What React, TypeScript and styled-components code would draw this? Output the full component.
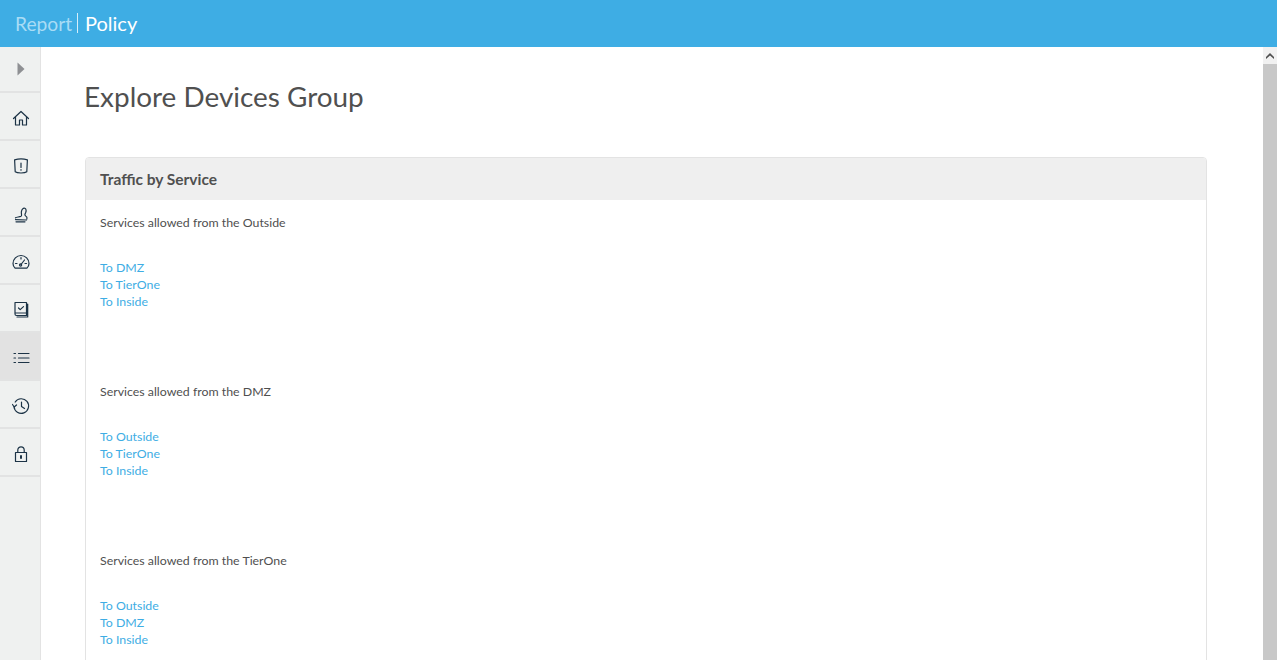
import React from "react";
import styled, { createGlobalStyle } from "styled-components";

const Global = createGlobalStyle`
  html, body { margin: 0; padding: 0; height: 100%; overflow: hidden; background: #fff; }
  body { font-family: "Lato", "Noto Sans", sans-serif; color: #4f4f4f; }
  #root { height: 100%; }
`;

const Page = styled.div`
  height: 660px;
  display: flex;
  flex-direction: column;
  overflow: hidden;
`;
const TopBar = styled.header`
  height: 47px;
  flex: none;
  box-sizing: border-box;
  padding: 0 0 1px 15px;
  background: #3eade4;
  display: flex;
  align-items: center;
  color: #fff;
  gap: 5px;
`;
const Crumb = styled.span`
  font-size: 19.2px;
  color: #a9dcf5;
`;
const CurrentCrumb = styled.span`
  font-size: 20px;
  margin-left: 2px;
  color: #fff;
`;
const Divider = styled.span`
  width: 1px;
  height: 20px;
  background: #d5eefa;
`;
const Body = styled.div`
  flex: 1;
  min-height: 0;
  display: flex;
`;
const Sidebar = styled.nav`
  width: 40px;
  flex: none;
  background: #eff1f0;
  border-right: 1px solid #e3e3e3;
  display: flex;
  flex-direction: column;
`;
const NavItem = styled.div<{ $active?: boolean; $first?: boolean }>`
  height: ${(p) => (p.$first ? 46 : 48)}px;
  flex: none;
  box-sizing: border-box;
  display: flex;
  align-items: center;
  justify-content: center;
  background: ${(p) => (p.$active ? "#e2e2e2" : "transparent")};
  border-bottom: 2px solid #e2e3e3;
  padding: ${(p) => (p.$first ? "0 0 0 1px" : "3px 0 0 1px")};
`;
const Main = styled.main`
  flex: 1;
  min-width: 0;
  overflow: hidden;
  padding: 0 56px 0 44px;
`;
const Title = styled.h1`
  margin: 31px 0 0 -1px;
  height: 79px;
  font-size: 27.9px;
  line-height: 36px;
  font-weight: 400;
  color: #505050;
`;
const Panel = styled.section`
  border: 1px solid #e3e3e3;
  border-radius: 4px;
  overflow: hidden;
`;
const PanelHead = styled.div`
  height: 42px;
  background: #efefef;
  display: flex;
  align-items: center;
  padding-left: 14px;
  font-size: 15.5px;
  font-weight: 700;
  color: #505050;
`;
const PanelBody = styled.div`
  padding: 14px 14px 0;
`;
const Group = styled.div`
  height: 169px;
  font-size: 12.35px;
  line-height: 17px;
`;
const Heading = styled.div`
  color: #4f4f4f;
  margin-bottom: 28px;
`;
const LinkItem = styled.a`
  display: block;
  color: #3eade4;
  text-decoration: none;
`;
const Scrollbar = styled.div`
  width: 14px;
  flex: none;
  background: #c8c8c8;
  display: flex;
  flex-direction: column;
`;
const ScrollButton = styled.div`
  height: 17px;
  background: #f1f1f1;
  display: flex;
  align-items: center;
  justify-content: center;
`;

const Ico = styled.svg`
  width: 18px;
  height: 18px;
  fill: none;
  stroke: #1c3346;
  stroke-width: 1.2;
  stroke-linecap: round;
  stroke-linejoin: round;
`;

const groups = [
  { from: "Outside", links: ["To DMZ", "To TierOne", "To Inside"] },
  { from: "DMZ", links: ["To Outside", "To TierOne", "To Inside"] },
  { from: "TierOne", links: ["To Outside", "To DMZ", "To Inside"] },
];

const icons: React.ReactNode[] = [
  <path key="h" d="M1.5 9.5 9 2.5l7.5 7M3.5 8v8h4v-5h3v5h4V8" />,
  <>
    <path d="M2.6 2.8C6 1.8 12 1.8 15.4 2.8L14.8 14.8c-2 1.6-9.6 1.6-11.6 0Z" />
    <path d="M9 6v4.5M9 12.6v.6" />
  </>,
  <>
    <path d="M4 16.8h9M3.5 14.6 14.5 15M3.5 12.8c1-.8 4-.8 5.5-1.6 1.4-.8 0-2.4.4-4.6.4-2.3 1.9-4 3.4-3.4s1.6 2.8.9 4.4c-.8 1.7-1.4 2.8.3 3.6 1 .4 1.2 1.4.9 2.8" />
  </>,
  <>
    <path d="M3.2 15.2C1.4 13.8 1 11.8 1 10.5a8 8 0 0 1 16 0c0 1.3-.4 3.3-2.2 4.7Z" />
    <path d="M9 11.5 12.5 7M9 4.5v1.5M3.5 10.5H5M13 10.5h1.5" />
    <circle cx="8.6" cy="12" r="1.1" />
  </>,
  <>
    <path d="M3 1.5h11.5v13H4.5A1.5 1.5 0 0 1 3 13V1.5ZM3 12h11.5M15.7 3v13H5" />
    <path d="m6.5 7 1.7 1.6 3.3-3" />
  </>,
  <>
    <path d="M6.5 4.5H17M6.5 9H17M6.5 13.5H17" />
    <path d="M2 4.5h1.5M2 9h1.5M2 13.5h1.5" />
  </>,
  <>
    <path d="M3.2 5A7.3 7.3 0 1 1 2 9.5" />
    <path d="M.5 7.5 2.2 10 4.5 8M9.5 5v4.5l3 2" />
  </>,
  <>
    <path d="M3.5 7.5h11v9h-11ZM5.8 7.5V5a3.2 3.2 0 0 1 6.4 0v2.5" />
    <path d="M9 11v2" strokeWidth="2" />
  </>,
];

export default function App() {
  return (
    <Page>
      <Global />
      <TopBar>
        <Crumb>Report</Crumb>
        <Divider />
        <CurrentCrumb>Policy</CurrentCrumb>
      </TopBar>
      <Body>
        <Sidebar>
          <NavItem $first>
            <svg width="8" height="14" viewBox="0 0 8 14">
              <path d="M0.5 0.5 7.5 7 0.5 13.5Z" fill="#8e9093" />
            </svg>
          </NavItem>
          {icons.map((icon, i) => (
            <NavItem key={i} $active={i === 5}>
              <Ico viewBox="0 0 18 18">{icon}</Ico>
            </NavItem>
          ))}
        </Sidebar>
        <Main>
          <Title>Explore Devices Group</Title>
          <Panel>
            <PanelHead>Traffic by Service</PanelHead>
            <PanelBody>
              {groups.map((g) => (
                <Group key={g.from}>
                  <Heading>Services allowed from the {g.from}</Heading>
                  {g.links.map((l) => (
                    <LinkItem key={l} href="#">
                      {l}
                    </LinkItem>
                  ))}
                </Group>
              ))}
            </PanelBody>
          </Panel>
        </Main>
        <Scrollbar>
          <ScrollButton>
            <svg width="8" height="6" viewBox="0 0 8 6">
              <path d="M0 6V4L4 0l4 4v2L4 2.5Z" fill="#505050" />
            </svg>
          </ScrollButton>
        </Scrollbar>
      </Body>
    </Page>
  );
}
